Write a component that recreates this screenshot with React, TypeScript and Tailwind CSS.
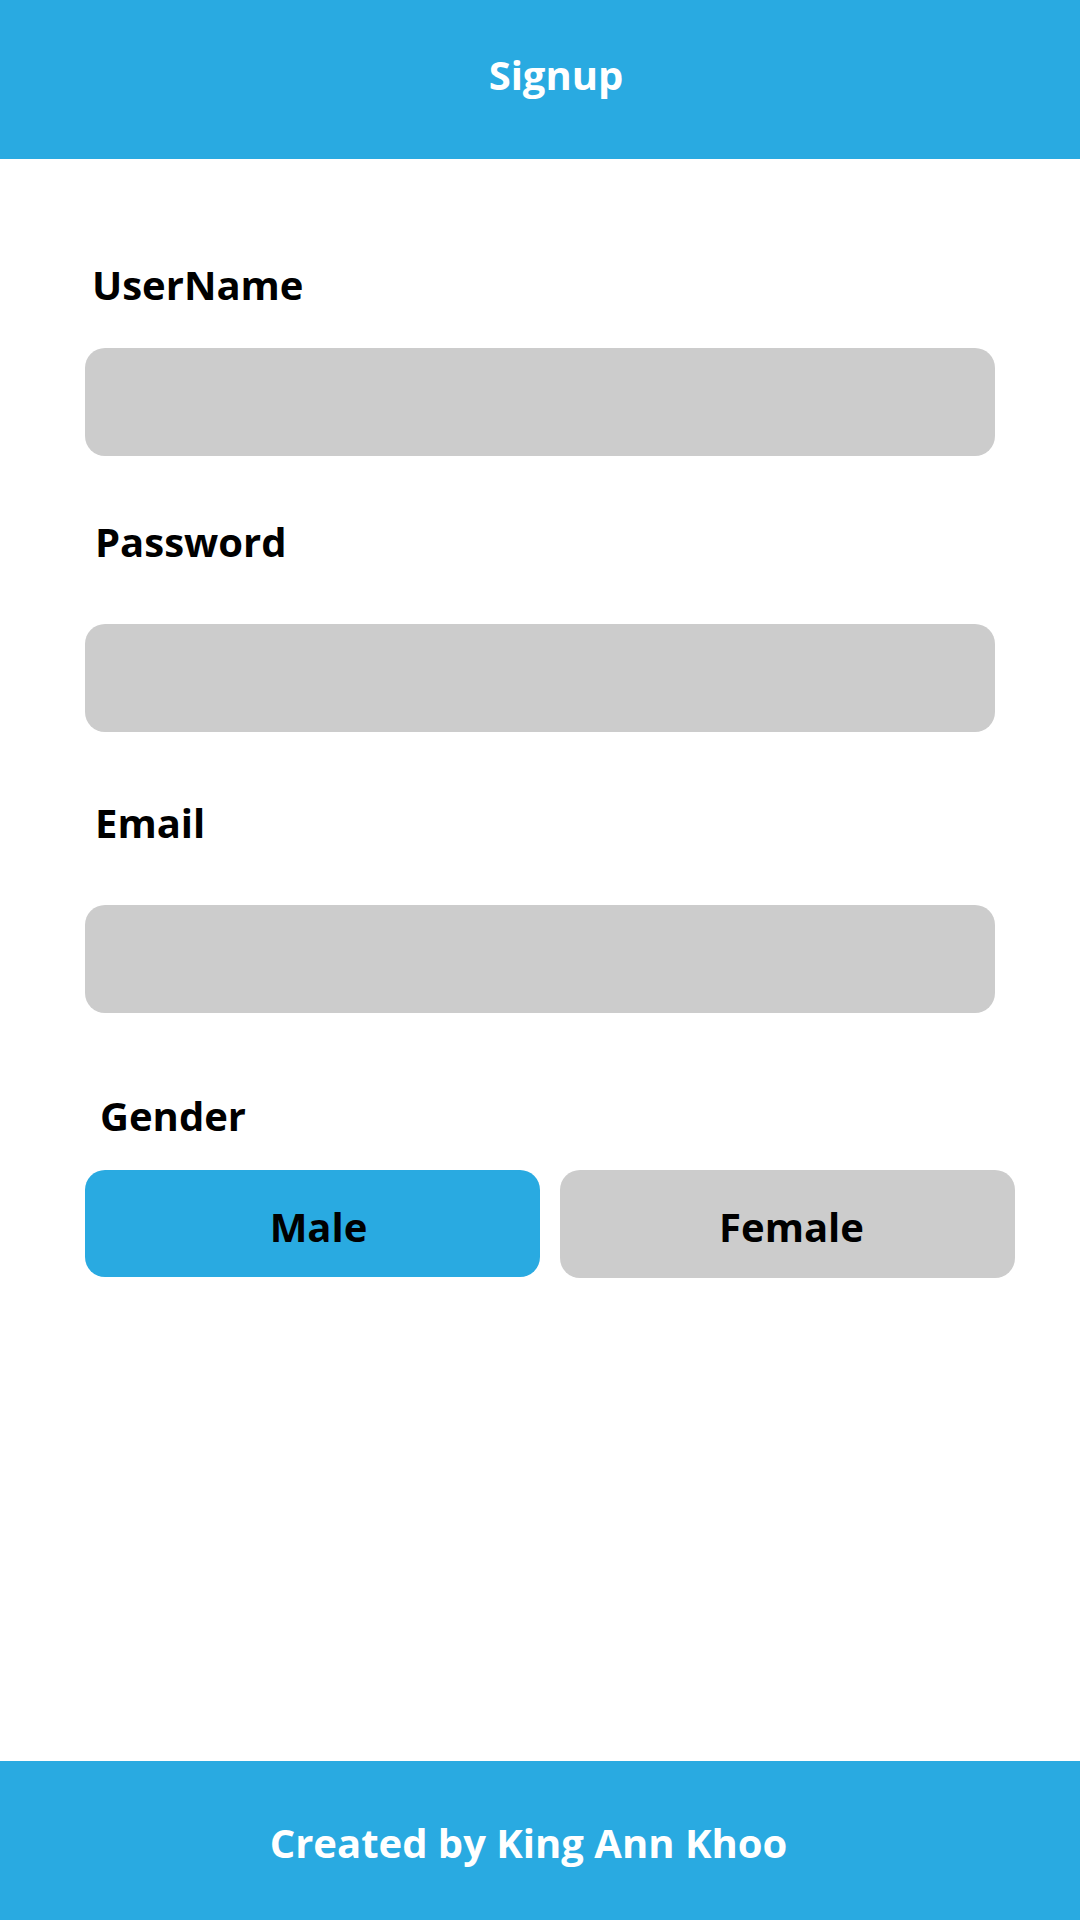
import React from 'react';

const fields = [
  { label: 'UserName', labelClass: 'mt-[106px] ml-[92px]', gap: 'mt-[43px]' },
  { label: 'Password', labelClass: 'mt-[66px] ml-[95px]', gap: 'mt-[62px]' },
  { label: 'Email', labelClass: 'mt-[71px] ml-[95px]', gap: 'mt-[62px]' },
];

const App: React.FC = () => {
  return (
    <div
      className="flex flex-col w-[1080px] h-[1920px] bg-white text-black"
      style={{ fontFamily: '"Open Sans", "Noto Sans", sans-serif' }}
    >
      {/* Header */}
      <header className="h-[159px] bg-[#29aae1] text-white text-center">
        <h1 className="pt-[55px] pl-[32px] text-[40px] leading-[40px] font-bold">Signup</h1>
      </header>

      {/* Form */}
      <main className="flex-1 flex flex-col">
        {fields.map((field) => (
          <div key={field.label} className="flex flex-col">
            <label className={`${field.labelClass} text-[40px] leading-[40px] font-bold`}>
              {field.label}
            </label>
            <input
              type="text"
              className={`${field.gap} ml-[85px] w-[910px] h-[108px] rounded-[20px] bg-[#cccccc] outline-none px-6 text-[36px]`}
            />
          </div>
        ))}

        {/* Gender */}
        <div className="flex flex-col">
          <span className="mt-[83px] ml-[100px] text-[40px] leading-[40px] font-bold">Gender</span>
          <div className="mt-[34px] ml-[85px] flex gap-[20px]">
            <button className="w-[455px] h-[107px] rounded-[20px] bg-[#29aae1] flex items-center justify-center pt-[6px] pl-[12px] text-[40px] leading-[40px] font-bold">
              Male
            </button>
            <button className="w-[455px] h-[108px] rounded-[20px] bg-[#cccccc] flex items-center justify-center pt-[6px] pl-[8px] text-[40px] leading-[40px] font-bold">
              Female
            </button>
          </div>
        </div>
      </main>

      {/* Footer */}
      <footer className="h-[159px] bg-[#29aae1] text-white text-center">
        <p className="pt-[62px] pr-[23px] text-[40px] leading-[40px] font-bold">Created by King Ann Khoo</p>
      </footer>
    </div>
  );
};

export default App;
